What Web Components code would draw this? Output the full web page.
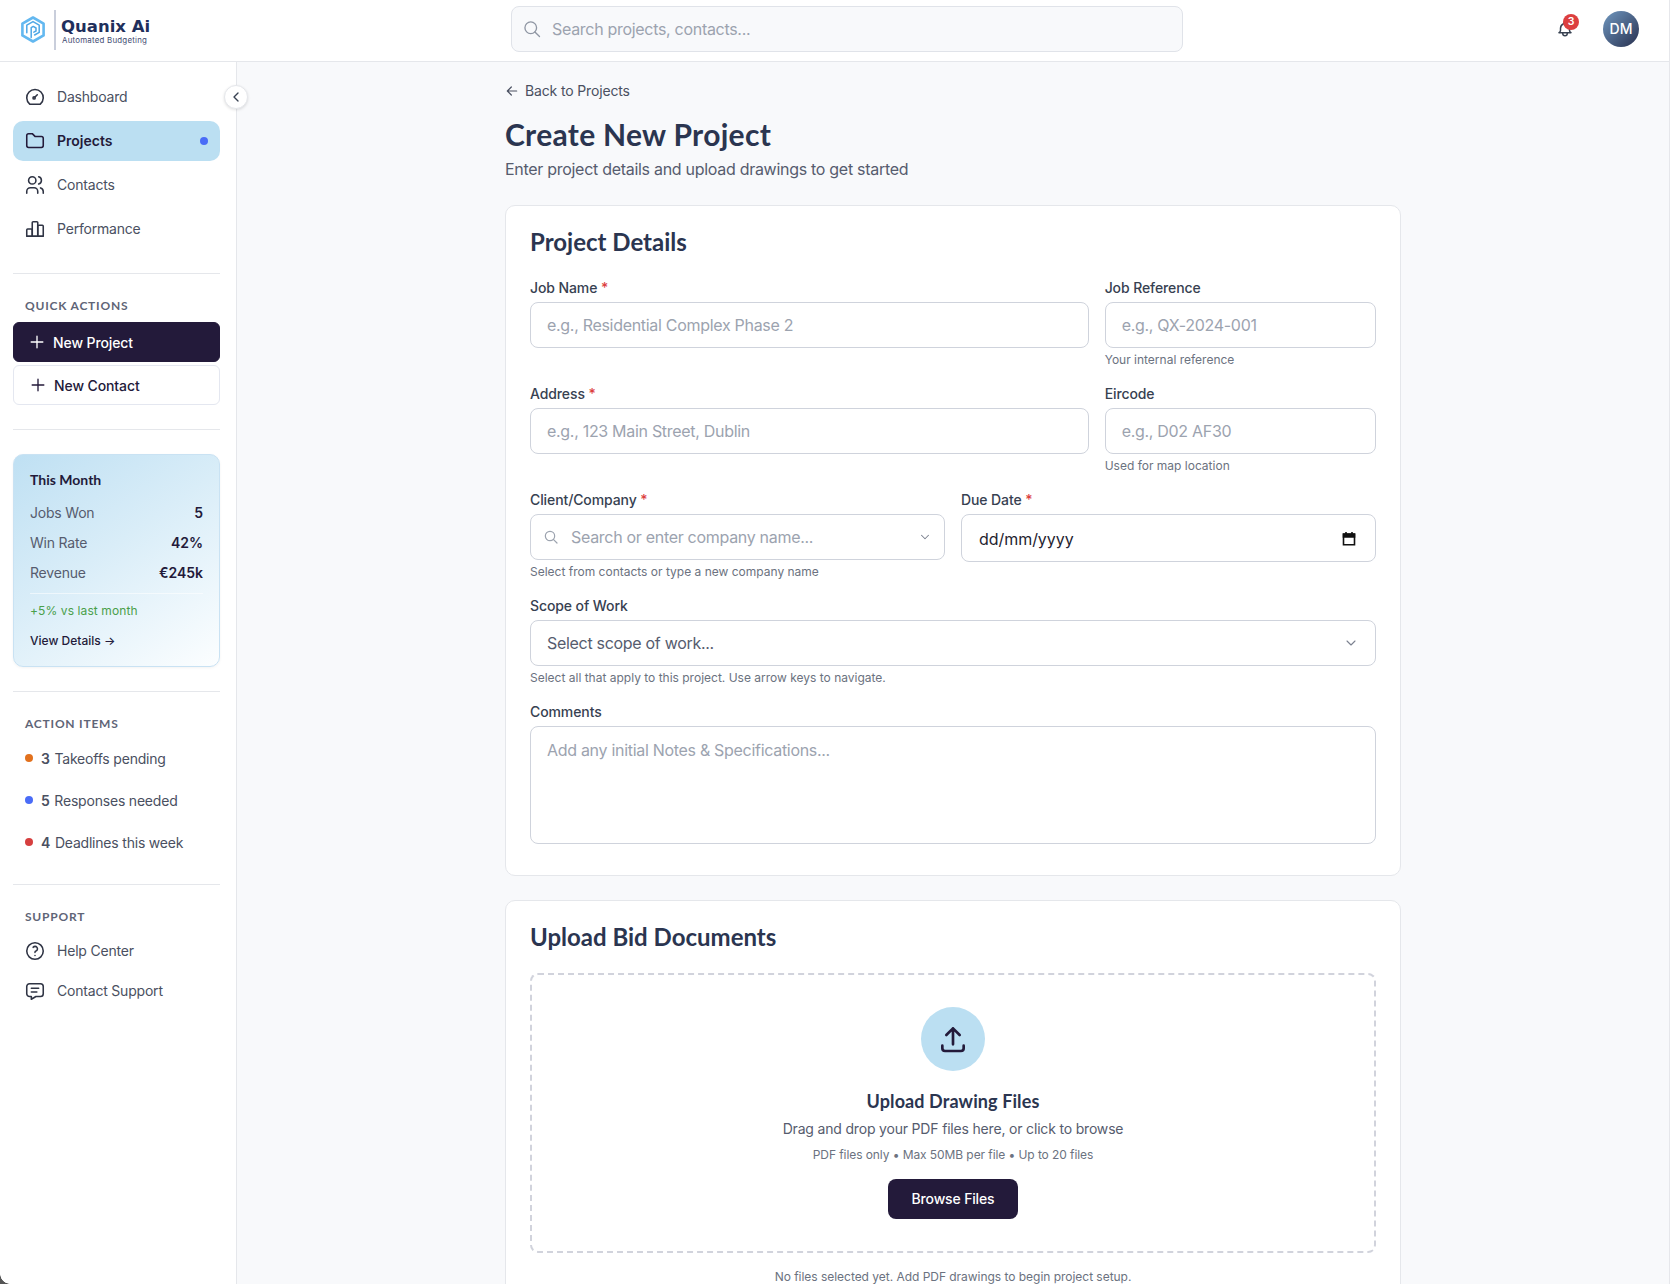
<!DOCTYPE html>
<html lang="en">
<head>
<meta charset="utf-8">
<title>Create New Project</title>
<style>
  html, body { margin: 0; height: 100%; overflow: hidden; background: #fff; }
  body { font-family: Inter, "Liberation Sans", sans-serif; color: #2b3550; }
</style>
</head>
<body>
<app-shell>
  <top-bar slot="top"></top-bar>
  <side-bar slot="side"></side-bar>

  <back-link>Back to Projects</back-link>
  <page-title heading="Create New Project">Enter project details and upload drawings to get started</page-title>

  <form-card heading="Project Details" class="details">
    <form-row cols="3">
      <form-field label="Job Name" required span="2"><text-box placeholder="e.g., Residential Complex Phase 2"></text-box></form-field>
      <form-field label="Job Reference" hint="Your internal reference"><text-box placeholder="e.g., QX-2024-001"></text-box></form-field>
    </form-row>
    <form-row cols="3">
      <form-field label="Address" required span="2"><text-box placeholder="e.g., 123 Main Street, Dublin"></text-box></form-field>
      <form-field label="Eircode" hint="Used for map location"><text-box placeholder="e.g., D02 AF30"></text-box></form-field>
    </form-row>
    <form-row cols="2">
      <form-field label="Client/Company" required hint="Select from contacts or type a new company name"><text-box kind="combo" placeholder="Search or enter company name..."></text-box></form-field>
      <form-field label="Due Date" required><text-box kind="date" placeholder="dd/mm/yyyy"></text-box></form-field>
    </form-row>
    <form-row cols="1">
      <form-field label="Scope of Work" hint="Select all that apply to this project. Use arrow keys to navigate."><text-box kind="select" placeholder="Select scope of work..."></text-box></form-field>
    </form-row>
    <form-row cols="1">
      <form-field label="Comments"><text-box kind="area" placeholder="Add any initial Notes &amp; Specifications..."></text-box></form-field>
    </form-row>
  </form-card>

  <form-card heading="Upload Bid Documents">
    <upload-zone></upload-zone>
  </form-card>
</app-shell>

<script>
// Tabler-style outlines, all on a 24 box. Stroke comes from the <svg> wrapper.
const ICONS = {
    gauge:   '<path d="M6 19.5a9 9 0 1 1 12 0a1.5 1.5 0 0 1-1 .5H7a1.5 1.5 0 0 1-1-.5z"/><circle cx="11" cy="13" r="1.2"/><path d="M12 12l2.5-2.5"/>',
    folder:  '<path d="M5 4h4l3 3h7a2 2 0 0 1 2 2v8a2 2 0 0 1-2 2H5a2 2 0 0 1-2-2V6a2 2 0 0 1 2-2"/>',
    users:   '<circle cx="9" cy="7" r="4"/><path d="M3 21v-2a4 4 0 0 1 4-4h4a4 4 0 0 1 4 4v2M16 3.13a4 4 0 0 1 0 7.75M21 21v-2a4 4 0 0 0-3-3.85"/>',
    bars:    '<rect x="3" y="12" width="6" height="8" rx="1"/><rect x="9" y="4" width="6" height="16" rx="1"/><rect x="15" y="8" width="6" height="12" rx="1"/><path d="M3 20h18"/>',
    help:    '<circle cx="12" cy="12" r="9"/><path d="M12 17v.01M12 13.5a1.5 1.5 0 0 1 1-1.5a2.6 2.6 0 1 0-3-4"/>',
    message: '<path d="M8 9h8M8 13h6M18 4a3 3 0 0 1 3 3v8a3 3 0 0 1-3 3h-5l-5 3v-3H6a3 3 0 0 1-3-3V7a3 3 0 0 1 3-3z"/>',
    plus:    '<path d="M12 5v14M5 12h14"/>',
    search:  '<circle cx="10.5" cy="10.5" r="7"/><path d="M21 21l-5.5-5.5"/>',
    chevron: '<path d="M6 9l6 6 6-6"/>',
    left:    '<path d="M15 6l-6 6 6 6"/>',
    arrow:   '<path d="M5 12h14M5 12l6 6M5 12l6-6"/>',
    bell:    '<path d="M10 5a2 2 0 1 1 4 0a7 7 0 0 1 4 6v3a4 4 0 0 0 2 3H4a4 4 0 0 0 2-3v-3a7 7 0 0 1 4-6M9 17v1a3 3 0 0 0 6 0v-1"/>',
    upload:  '<path d="M4 17v2a2 2 0 0 0 2 2h12a2 2 0 0 0 2-2v-2M12 4v12M7 9l5-5 5 5"/>',
};

function icon(name, size, stroke = 2) {
    return `<svg width="${size}" height="${size}" viewBox="0 0 24 24" fill="none" stroke="currentColor"
        stroke-width="${stroke}" stroke-linecap="round" stroke-linejoin="round" aria-hidden="true">${ICONS[name]}</svg>`;
}

const HEADING_FONT = `Lato, "Noto Sans", sans-serif`;

// Small base class: subclasses supply static styles and a markup() method.
class ShadowEl extends HTMLElement {
    connectedCallback() {
        if (this.shadowRoot) return;
        this.attachShadow({ mode: 'open' });
        this.shadowRoot.innerHTML = `<style>${this.constructor.styles}</style>${this.markup()}`;
    }
    attr(name, fallback = '') {
        return this.getAttribute(name) ?? fallback;
    }
}

class AppShell extends ShadowEl {
    static styles = `
        :host { display: flex; flex-direction: column; height: 100vh; position: relative; overflow: hidden; }
        .body { flex: 1; display: flex; min-height: 0; }
        main { flex: 1; background: #f8f9fb; overflow: hidden; padding-top: 19px; }
        .column { width: 896px; margin-left: 268px; display: flex; flex-direction: column; }
        .corner { position: absolute; left: 0; bottom: 0; width: 10px; height: 10px;
                  background: radial-gradient(circle at 100% 0, transparent 9.5px, #555 10px); }
        .edge { position: absolute; right: 0; top: 0; bottom: 0; width: 1px; background: #fff; border-left: 1px solid #e6e7eb; }
    `;
    markup() {
        return `
            <slot name="top"></slot>
            <div class="body">
                <slot name="side"></slot>
                <main><div class="column"><slot></slot></div></main>
            </div>
            <div class="corner"></div>
            <div class="edge"></div>`;
    }
}

class TopBar extends ShadowEl {
    static styles = `
        :host { display: flex; align-items: center; height: 61px; background: #fff; border-bottom: 1px solid #e5e7eb; flex: none; position: relative; }
        .logo { width: 511px; flex: none; display: flex; align-items: center; padding-left: 21px; box-sizing: border-box; }
        .mark { margin-top: -3px; flex: none; }
        .rule { width: 2px; height: 40px; background: #c9cedb; margin: -2px 5px 0 9px; }
        .word { display: flex; flex-direction: column; margin-top: 2px; }
        .name { font: 700 16.5px/17px "DejaVu Sans", sans-serif; color: #1f2f5c; white-space: nowrap; }
        .tag { font: 400 7.9px/10px Inter, sans-serif; color: #3f4c72; white-space: nowrap; margin: 0 0 0 1px; letter-spacing: .22px; }
        .search { width: 672px; height: 46px; box-sizing: border-box; border: 1px solid #e0e3e9; border-radius: 8px; background: #f8f9fb;
                  display: flex; align-items: center; gap: 10px; padding-left: 10px; color: #8f96a3; font-size: 16px; letter-spacing: -.3px; margin-top: -3px; }
        .search svg { flex: none; }
        .search span { color: #9ca3af; }
        .right { flex: 1; display: flex; align-items: center; }
        .bell { position: relative; margin-left: 373px; width: 18px; height: 18px; color: #374151; margin-top: -3px; }
        .badge { position: absolute; left: 7px; top: -6px; width: 16px; height: 16px; border-radius: 50%; background: #dc3f3f; color: #fff;
                 font: 600 10.5px/16px Inter, sans-serif; text-align: center; }
        .avatar { margin-left: 29px; width: 36px; height: 36px; border-radius: 50%; background: linear-gradient(135deg, #7098c0, #28304f);
                  color: #fff; font: 500 14px/36px Inter, sans-serif; text-align: center; margin-top: -3px; }
    `;
    markup() {
        return `
            <div class="logo">
                <svg class="mark" width="24" height="27" viewBox="0 0 24 27" fill="none" stroke-linejoin="round" stroke-linecap="round">
                    <path d="M12 1.5L22.6 7.6V19.4L12 25.5L1.4 19.4V7.6Z" stroke="#63b8f0" stroke-width="2.6"/>
                    <path d="M5.8 16.8V9.1L12 5.6L18.2 9.1V16.4L13.6 19" stroke="#4ea7e6" stroke-width="1.5"/>
                    <path d="M10.2 21.6V11.6L12.2 10.4L15 12V15L12.8 16.2" stroke="#4ea7e6" stroke-width="1.5"/>
                </svg>
                <div class="rule"></div>
                <div class="word">
                    <span class="name">Quanix Ai</span>
                    <span class="tag">Automated Budgeting</span>
                </div>
            </div>
            <div class="search">${icon('search', 20, 1.6)}<span>Search projects, contacts...</span></div>
            <div class="right">
                <div class="bell">${icon('bell', 18, 2)}<div class="badge">3</div></div>
                <div class="avatar">DM</div>
            </div>`;
    }
}

class SideBar extends ShadowEl {
    static styles = `
        :host { display: block; position: relative; flex: none; width: 236px; box-sizing: content-box; background: #fff;
                border-right: 1px solid #e5e7eb; }
        .inner { padding: 15px 16px 0 13px; display: flex; flex-direction: column; }
        .stack { display: flex; flex-direction: column; gap: 4px; }
        hr { border: 0; height: 1px; background: #e5e7eb; margin: 24px 0; }
        h4 { margin: 0 0 8px; padding-left: 12px; font: 700 12px/16px ${HEADING_FONT}; letter-spacing: .78px; color: #5f6577; text-transform: uppercase; }
        .toggle { position: absolute; left: 224px; top: 23px; width: 22px; height: 22px; border-radius: 50%; background: #fff;
                  border: 1px solid #e5e7eb; box-shadow: 0 1px 3px rgba(0,0,0,.12); display: flex; align-items: center; justify-content: center; color: #374151; }
        .btns { display: flex; flex-direction: column; gap: 3px; }
        .todo { display: flex; flex-direction: column; gap: 6px; }
        .support { display: flex; flex-direction: column; gap: 4px; }
    `;
    markup() {
        return `
            <div class="toggle">${icon('left', 16, 2)}</div>
            <div class="inner">
                <div class="stack">
                    <nav-item icon="gauge">Dashboard</nav-item>
                    <nav-item icon="folder" active>Projects</nav-item>
                    <nav-item icon="users">Contacts</nav-item>
                    <nav-item icon="bars">Performance</nav-item>
                </div>
                <hr>
                <h4>Quick Actions</h4>
                <div class="btns">
                    <action-button primary>New Project</action-button>
                    <action-button>New Contact</action-button>
                </div>
                <hr>
                <month-card></month-card>
                <hr>
                <h4>Action Items</h4>
                <div class="todo">
                    <todo-item color="#e2711d" count="3">Takeoffs pending</todo-item>
                    <todo-item color="#4a6cf7" count="5">Responses needed</todo-item>
                    <todo-item color="#d63f3f" count="4">Deadlines this week</todo-item>
                </div>
                <hr>
                <h4>Support</h4>
                <div class="support">
                    <nav-item icon="help" compact>Help Center</nav-item>
                    <nav-item icon="message" compact>Contact Support</nav-item>
                </div>
            </div>`;
    }
}

class NavItem extends ShadowEl {
    static styles = `
        :host { display: flex; align-items: center; gap: 11px; height: 40px; padding: 0 12px 0 11px; border-radius: 10px;
                font-size: 14px; letter-spacing: -.2px; color: #4a5061; }
        :host([compact]) { height: 36px; }
        :host([active]) { background: #bbdff2; color: #231a3a; font-weight: 600; letter-spacing: 0; }
        svg { flex: none; color: #2f3444; }
        :host([active]) svg { color: #231a3a; }
        .label { margin-top: -1px; }
        .dot { margin-left: auto; width: 8px; height: 8px; border-radius: 50%; background: #4a6cf7; }
    `;
    markup() {
        const dot = this.hasAttribute('active') ? '<span class="dot"></span>' : '';
        return `${icon(this.attr('icon'), 22, 1.7)}<span class="label"><slot></slot></span>${dot}`;
    }
}

class ActionButton extends ShadowEl {
    static styles = `
        :host { display: flex; align-items: center; gap: 6px; height: 40px; box-sizing: border-box; padding-left: 14px; border-radius: 6px;
                border: 1px solid #e4e7f0; background: #fff; color: #231a3a; font-size: 14px; font-weight: 500; letter-spacing: -.1px; }
        :host([primary]) { background: #231a3a; border-color: #231a3a; color: #fff; padding-left: 13px; }
        svg { flex: none; }
    `;
    markup() {
        return `${icon('plus', 20, 1.6)}<slot></slot>`;
    }
}

class MonthCard extends ShadowEl {
    static styles = `
        :host { display: block; height: 213px; box-sizing: border-box; padding: 15px 16px 0; border-radius: 10px; border: 1px solid #c9e2f3;
                background: linear-gradient(145deg, #bfe0f3 0%, #d9edf8 45%, #fcfeff 100%); box-shadow: 0 1px 3px rgba(0,0,0,.05); }
        .title { font: 700 14px/20px ${HEADING_FONT}; color: #231a3a; margin-bottom: 13px; }
        .row { display: flex; justify-content: space-between; height: 20px; line-height: 20px; font-size: 14px; color: #565c6e; margin-bottom: 10px; }
        .row span { letter-spacing: -.2px; }
        b { font-weight: 600; color: #231a3a; }
        .rule { height: 1px; background: rgba(255,255,255,.55); margin-bottom: 9px; }
        .trend { font-size: 12px; line-height: 16px; color: #4a9f4a; letter-spacing: .1px; }
        .more { font-size: 12px; line-height: 16px; color: #231a3a; font-weight: 500; margin-top: 14px; }
    `;
    markup() {
        return `
            <div class="title">This Month</div>
            <div class="row"><span>Jobs Won</span><b>5</b></div>
            <div class="row"><span>Win Rate</span><b>42%</b></div>
            <div class="row"><span>Revenue</span><b>€245k</b></div>
            <div class="rule"></div>
            <div class="trend">+5% vs last month</div>
            <div class="more">View Details →</div>`;
    }
}

class TodoItem extends ShadowEl {
    static styles = `
        :host { display: flex; align-items: center; gap: 8px; height: 36px; padding-left: 12px; font-size: 14px; letter-spacing: -.2px; color: #4a5061; }
        .dot { width: 8px; height: 8px; border-radius: 50%; flex: none; }
        b { font-weight: 600; margin-right: 1px; }
    `;
    markup() {
        return `<span class="dot" style="background:${this.attr('color')}"></span><span><b>${this.attr('count')}</b> <slot></slot></span>`;
    }
}

class BackLink extends ShadowEl {
    static styles = `
        :host { display: flex; align-items: center; gap: 5px; height: 20px; margin-bottom: 16px; font-size: 14px; letter-spacing: -.15px; color: #4a5061; }
        svg { flex: none; margin-left: -1px; }
        .label { margin-top: -1px; }
    `;
    markup() {
        return `${icon('arrow', 16, 1.8)}<span class="label"><slot></slot></span>`;
    }
}

class PageTitle extends ShadowEl {
    static styles = `
        :host { display: block; margin-bottom: 24px; }
        h1 { margin: -1px 0 5px; font: 700 30px/36px ${HEADING_FONT}; letter-spacing: .3px; color: #2b3550; }
        p { margin: 0; font-size: 16px; line-height: 24px; letter-spacing: -.29px; color: #565c6e; }
    `;
    markup() {
        return `<h1>${this.attr('heading')}</h1><p><slot></slot></p>`;
    }
}

class FormCard extends ShadowEl {
    static styles = `
        :host { display: block; background: #fff; border: 1px solid #e5e7eb; border-radius: 10px; padding: 24px; margin-bottom: 24px; }
        :host(.details) { padding-bottom: 31px; }
        h2 { margin: 0 0 24px; font: 700 24px/24px ${HEADING_FONT}; color: #2b3550; }
        .rows { display: flex; flex-direction: column; gap: 16px; }
    `;
    markup() {
        return `<h2>${this.attr('heading')}</h2><div class="rows"><slot></slot></div>`;
    }
}

class FormRow extends ShadowEl {
    static styles = `:host { display: grid; gap: 16px; }`;
    markup() {
        return `<style>:host { grid-template-columns: repeat(${this.attr('cols', '1')}, minmax(0, 1fr)); }</style><slot></slot>`;
    }
}

class FormField extends ShadowEl {
    static styles = `
        :host { display: block; min-width: 0; }
        label { display: block; font-size: 14px; line-height: 20px; font-weight: 500; letter-spacing: -.1px; color: #374151; margin-bottom: 4px; }
        i { font-style: normal; color: #dc3f3f; }
        .hint { font-size: 12px; line-height: 16px; color: #6b7280; margin-top: 4px; }
    `;
    markup() {
        const span = this.attr('span');
        const req = this.hasAttribute('required') ? ' <i>*</i>' : '';
        const hint = this.attr('hint');
        return `${span ? `<style>:host { grid-column: span ${span}; }</style>` : ''}
            <label>${this.attr('label')}${req}</label>
            <slot></slot>
            ${hint ? `<div class="hint">${hint}</div>` : ''}`;
    }
}

class TextBox extends ShadowEl {
    static styles = `
        :host { display: flex; align-items: center; height: 46px; box-sizing: border-box; border: 1px solid #cfd3dc; border-radius: 8px;
                background: #fff; padding: 0 16px; font-size: 16px; letter-spacing: -.3px; color: #9ca3af; }
        :host([kind="area"]) { align-items: flex-start; height: 118px; padding-top: 11px; line-height: 24px; }
        :host([kind="date"]) { height: 48px; padding: 1px 16px 0 17px; color: #1f2430; letter-spacing: -.05px; justify-content: space-between; }
        :host([kind="select"]) { color: #565c6e; justify-content: space-between; padding-right: 16px; }
        :host([kind="combo"]) { padding: 0 12px 0 12px; }
        .lead { color: #9ca3af; margin-right: 12px; flex: none; display: flex; }
        .end { margin-left: auto; color: #7b818f; flex: none; display: flex; }
        .cal { width: 16px; height: 16px; flex: none; display: flex; margin-right: 2px; color: #111; }
    `;
    markup() {
        const kind = this.attr('kind');
        const text = `<span>${this.attr('placeholder')}</span>`;
        if (kind === 'combo') {
            return `<span class="lead">${icon('search', 16, 1.8)}</span>${text}<span class="end">${icon('chevron', 14, 1.8)}</span>`;
        }
        if (kind === 'select') {
            return `${text}<span class="end">${icon('chevron', 16, 1.6)}</span>`;
        }
        if (kind === 'date') {
            return `${text}<span class="cal"><svg width="16" height="16" viewBox="0 0 16 16" fill="none" stroke="currentColor" stroke-width="1.6">
                <path d="M2.5 3.2h11v10.6h-11zM5 1v3M11 1v3"/><path d="M2.5 3h11v3h-11z" fill="currentColor"/></svg></span>`;
        }
        return text;
    }
}

class UploadZone extends ShadowEl {
    static styles = `
        :host { display: block; text-align: center; }
        .zone { height: 280px; box-sizing: border-box; border: 2px dashed #d1d3dc; border-radius: 8px; padding-top: 32px;
                display: flex; flex-direction: column; align-items: center; }
        .circle { width: 64px; height: 64px; border-radius: 50%; background: #bbdff2; color: #231a3a; display: flex; align-items: center; justify-content: center; margin-bottom: 16px; }
        h3 { margin: 0 0 4px; font: 700 18px/28px ${HEADING_FONT}; letter-spacing: .1px; color: #2b3550; }
        .lead { font-size: 14px; line-height: 20px; letter-spacing: -.18px; color: #565c6e; margin-bottom: 8px; }
        .fine { font-size: 12px; line-height: 16px; letter-spacing: -.08px; color: #6b7280; }
        .btn { margin-top: 16px; width: 130px; height: 40px; border-radius: 8px; background: #231a3a; color: #fff; font-size: 14px; letter-spacing: -.15px; font-weight: 500; line-height: 40px; }
        .status { font-size: 12px; line-height: 16px; letter-spacing: -.03px; color: #6b7280; margin-top: 16px; }
    `;
    markup() {
        return `
            <div class="zone">
                <div class="circle">${icon('upload', 32, 2)}</div>
                <h3>Upload Drawing Files</h3>
                <div class="lead">Drag and drop your PDF files here, or click to browse</div>
                <div class="fine">PDF files only • Max 50MB per file • Up to 20 files</div>
                <div class="btn">Browse Files</div>
            </div>
            <div class="status">No files selected yet. Add PDF drawings to begin project setup.</div>`;
    }
}

customElements.define('app-shell', AppShell);
customElements.define('top-bar', TopBar);
customElements.define('side-bar', SideBar);
customElements.define('nav-item', NavItem);
customElements.define('action-button', ActionButton);
customElements.define('month-card', MonthCard);
customElements.define('todo-item', TodoItem);
customElements.define('back-link', BackLink);
customElements.define('page-title', PageTitle);
customElements.define('form-card', FormCard);
customElements.define('form-row', FormRow);
customElements.define('form-field', FormField);
customElements.define('text-box', TextBox);
customElements.define('upload-zone', UploadZone);
</script>
</body>
</html>
